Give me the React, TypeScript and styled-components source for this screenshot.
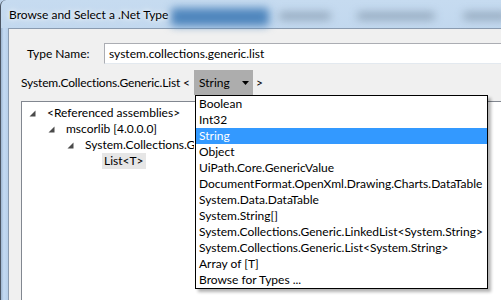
import React, { FC } from "react";
import styled, { createGlobalStyle } from "styled-components";

const GlobalStyle = createGlobalStyle`
  * { box-sizing: border-box; }
  html, body { margin: 0; padding: 0; background: #bcd2ea; }
  body {
    font-family: Lato, "Liberation Sans", sans-serif;
    font-size: 12px;
    color: #000;
  }
`;

const typeOptions = [
  "Boolean",
  "Int32",
  "String",
  "Object",
  "UiPath.Core.GenericValue",
  "DocumentFormat.OpenXml.Drawing.Charts.DataTable",
  "System.Data.DataTable",
  "System.String[]",
  "System.Collections.Generic.LinkedList<System.String>",
  "System.Collections.Generic.List<System.String>",
  "Array of [T]",
  "Browse for Types ...",
];

const treeNodes = [
  { label: "<Referenced assemblies>", depth: 0, expanded: true },
  { label: "mscorlib [4.0.0.0]", depth: 1, expanded: true },
  { label: "System.Collections.Generic", depth: 2, expanded: true },
  { label: "List<T>", depth: 3, expanded: false, selected: true },
];

const ExpandedArrow: FC = () => (
  <svg width="7" height="7" viewBox="0 0 7 7">
    <polygon points="6.5,0.5 6.5,6.5 0.5,6.5" fill="#4a4a4a" />
  </svg>
);

const DropArrow: FC = () => (
  <svg width="7" height="4" viewBox="0 0 7 4">
    <polygon points="0,0 7,0 3.5,4" fill="#000" />
  </svg>
);

const App: FC = () => {
  return (
    <>
      <GlobalStyle />
      <Window>
        <TitleBar>
          <GlassBlob style={{ left: 170, width: 98, top: 8, height: 18 }} $tone="dark" />
          <GlassBlob style={{ left: 278, width: 52, top: 12, height: 8 }} $tone="grey" />
          <GlassBlob style={{ left: 356, width: 78, top: 12, height: 8 }} $tone="grey" />
          <GlassBlob style={{ left: 462, width: 45, top: 12, height: 8 }} $tone="grey" />
          <Title>Browse and Select a .Net Type</Title>
        </TitleBar>
        <Body>
          <SideFrame />
          <Client>
            <NameRow>
              <Label>Type Name:</Label>
              <TextBox>system.collections.generic.list</TextBox>
            </NameRow>
            <GenericRow>
              <Prefix>System.Collections.Generic.List &lt;</Prefix>
              <Combo>
                <span>String</span>
                <DropArrow />
              </Combo>
              <span>&gt;</span>
            </GenericRow>
            <Tree>
              {treeNodes.map((node) => (
                <TreeRow key={node.label} $depth={node.depth}>
                  <Expander>{node.expanded && <ExpandedArrow />}</Expander>
                  <TreeLabel $selected={node.selected}>{node.label}</TreeLabel>
                </TreeRow>
              ))}
            </Tree>
          </Client>
        </Body>
        <DropList>
          {typeOptions.map((option) => (
            <Option key={option} $active={option === "String"}>
              {option}
            </Option>
          ))}
        </DropList>
      </Window>
    </>
  );
};

export default App;

const Window = styled.div`
  position: relative;
  display: flex;
  flex-direction: column;
  width: 501px;
  height: 300px;
  overflow: hidden;
  background: linear-gradient(180deg, #c6dbf0 0%, #b6cfea 40%, #bdd3ec 100%);
  border-left: 1px solid #4b5563;
  border-top-left-radius: 6px;
`;

const TitleBar = styled.div`
  position: relative;
  display: flex;
  align-items: center;
  height: 28px;
  padding-left: 8px;
  flex-shrink: 0;
`;

const GlassBlob = styled.div<{ $tone: "dark" | "grey" }>`
  position: absolute;
  border-radius: 4px;
  filter: blur(4px);
  background: ${(p) => (p.$tone === "dark" ? "#4f86bd" : "rgba(90, 110, 130, 0.45)")};
`;

const Title = styled.div`
  position: relative;
  font-size: 12px;
  color: #000;
  text-shadow: 0 0 8px rgba(255, 255, 255, 0.9), 0 0 4px rgba(255, 255, 255, 0.9);
`;

const Body = styled.div`
  display: flex;
  flex: 1;
  min-height: 0;
`;

const SideFrame = styled.div`
  width: 7px;
  flex-shrink: 0;
  background: linear-gradient(90deg, #9fb7d2 0%, #c3daf3 40%, #b8d0ea 100%);
`;

const Client = styled.div`
  flex: 1;
  display: flex;
  flex-direction: column;
  background: #f0f0f0;
  border-left: 1px solid #8a9bb0;
  border-top: 1px solid #8a9bb0;
  padding: 14px 0 0 12px;
  min-width: 0;
`;

const NameRow = styled.div`
  display: flex;
  align-items: center;
  height: 21px;
`;

const Label = styled.span`
  width: 83px;
  padding-left: 6px;
  flex-shrink: 0;
`;

const TextBox = styled.div`
  flex: 1;
  height: 21px;
  line-height: 19px;
  padding-left: 4px;
  background: #fff;
  border: 1px solid #abadb3;
  border-bottom-color: #e3e9ef;
  border-right: none;
  white-space: nowrap;
`;

const GenericRow = styled.div`
  display: flex;
  align-items: center;
  gap: 3px;
  height: 25px;
  margin-top: 6px;
`;

const Prefix = styled.span`
  width: 170px;
  flex-shrink: 0;
  white-space: nowrap;
  letter-spacing: -0.15px;
`;

const Combo = styled.div`
  display: flex;
  align-items: center;
  justify-content: space-between;
  width: 59px;
  height: 25px;
  padding: 0 4px 0 5px;
  background: #adadad;
`;

const Tree = styled.div`
  flex: 1;
  margin-top: 6px;
  padding-top: 3px;
  background: #fff;
  border: 1px solid #828790;
  border-right: none;
  border-bottom: none;
`;

const TreeRow = styled.div<{ $depth: number }>`
  display: flex;
  align-items: center;
  height: 16px;
  max-width: 172px;
  overflow: hidden;
  padding-left: ${(p) => 7 + p.$depth * 19}px;
`;

const Expander = styled.span`
  display: flex;
  align-items: center;
  width: 16px;
  flex-shrink: 0;
`;

const TreeLabel = styled.span<{ $selected?: boolean }>`
  padding: 0 2px;
  line-height: 16px;
  white-space: nowrap;
  background: ${(p) => (p.$selected ? "#e6e6e6" : "transparent")};
`;

const DropList = styled.div`
  position: absolute;
  left: 194px;
  top: 95px;
  width: 293px;
  padding: 0;
  background: #fff;
  border: 1px solid #000;
  box-shadow: 3px 3px 3px rgba(0, 0, 0, 0.3);
`;

const Option = styled.div<{ $active?: boolean }>`
  height: 16px;
  line-height: 16px;
  padding-left: 3px;
  white-space: nowrap;
  background: ${(p) => (p.$active ? "#3399ff" : "transparent")};
  color: ${(p) => (p.$active ? "#fff" : "#000")};
`;
